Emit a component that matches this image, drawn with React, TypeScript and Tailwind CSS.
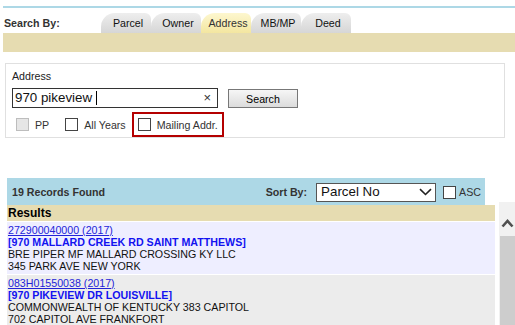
import React from "react";

const tabs = ["Parcel", "Owner", "Address", "MB/MP", "Deed"];

const results = [
  {
    id: "272900040000 (2017)",
    addr: "[970 MALLARD CREEK RD SAINT MATTHEWS]",
    owner: "BRE PIPER MF MALLARD CROSSING KY LLC",
    mail: "345 PARK AVE NEW YORK",
    bg: "bg-[#eeeeff]",
  },
  {
    id: "083H01550038 (2017)",
    addr: "[970 PIKEVIEW DR LOUISVILLE]",
    owner: "COMMONWEALTH OF KENTUCKY 383 CAPITOL",
    mail: "702 CAPITOL AVE FRANKFORT",
    bg: "bg-[#ececec]",
  },
];

function Box({ disabled }: { disabled?: boolean }) {
  return (
    <span
      className={
        disabled
          ? "inline-block w-[13px] h-[13px] border border-[#bdbdbd] bg-[#e6e6e6]"
          : "inline-block w-[13px] h-[13px] border border-[#444] bg-white"
      }
    />
  );
}

export default function App() {
  return (
    <div className="w-[515px] h-[325px] overflow-hidden bg-white font-['Liberation_Sans',Arial,sans-serif] text-[10.67px] text-[#222]">
      <div className="mt-[6px] ml-[3px] h-[2px] bg-[#add8e6]" />

      {/* tab strip */}
      <div className="ml-[3px] flex items-end h-[25px]">
        <div className="w-[98px] pl-[1px] pb-[2px] font-bold text-[#333]">Search By:</div>
        <div className="flex items-end">
          {tabs.map((t) => (
            <div
              key={t}
              className={
                t === "Address"
                  ? "w-[50px] h-[20px] flex items-center justify-center pl-[4px] rounded-tl-[14px] rounded-tr-[6px] bg-linear-to-b from-[#fdf7cf] to-[#f3e6a0] text-[#333]"
                  : "w-[50px] h-[20px] flex items-center justify-center pl-[4px] rounded-tl-[14px] rounded-tr-[6px] bg-linear-to-b from-[#eeeeee] to-[#d6d6d6] text-[#111]"
              }
            >
              {t}
            </div>
          ))}
        </div>
      </div>
      <div className="ml-[3px] h-[19px] bg-[#e6dcb1]" />

      {/* search panel */}
      <div className="mt-[11px] ml-[5px] w-[500px] h-[75px] border border-[#e0e0e0] pl-[6px] pt-[6px]">
        <div className="leading-[12px] text-[#222]">Address</div>
        <div className="mt-[5px] flex items-center">
          <div className="w-[206px] h-[20px] border border-[#333] flex items-center pl-[2px] pr-[6px] text-[13.33px] text-[#111]">
            <span>970 pikeview</span>
            <span className="ml-[4px] w-[1px] h-[14px] bg-black" />
            <span className="ml-auto text-[13px] text-[#333]">×</span>
          </div>
          <div className="ml-[10px] mt-[2px] w-[70px] h-[19px] border border-[#777] bg-linear-to-b from-[#f6f6f6] to-[#dcdcdc] flex items-center justify-center text-black">
            Search
          </div>
        </div>
        <div className="mt-[4px] flex items-center h-[25px]">
          <div className="ml-[4px] flex items-center">
            <Box disabled />
            <span className="ml-[6px] text-[#333]">PP</span>
          </div>
          <div className="ml-[16px] flex items-center">
            <Box />
            <span className="ml-[6px] text-[#333]">All Years</span>
          </div>
          <div className="ml-[6px] w-[92px] h-[25px] border-2 border-[#b40000] flex items-center pl-[4px]">
            <Box />
            <span className="ml-[6px] text-[#333]">Mailing Addr.</span>
          </div>
        </div>
      </div>

      {/* results */}
      <div className="mt-[40px] flex">
        <div className="ml-[7px] w-[488px]">
          <div className="w-[478px] h-[27px] bg-[#add8e6] flex items-center pl-[5px] pt-[1px]">
            <span className="font-bold text-[#333]">19 Records Found</span>
            <span className="ml-auto font-bold text-[#333]">Sort By:</span>
            <div className="ml-[9px] w-[120px] h-[19px] border border-[#555] bg-white flex items-center pl-[4px] pr-[3px] text-[13.33px] text-[#111]">
              <span>Parcel No</span>
              <svg className="ml-auto" width="13" height="8" viewBox="0 0 13 8">
                <path d="M1 1.2 L6.5 6.5 L12 1.2" fill="none" stroke="#222" strokeWidth="1.6" />
              </svg>
            </div>
            <div className="ml-[7px] flex items-center pr-[4px]">
              <Box />
              <span className="ml-[3px] text-[#333]">ASC</span>
            </div>
          </div>
          <div className="h-[16px] bg-[#e6dcb1] pl-[1px] flex items-center text-[12px] font-bold text-black">
            Results
          </div>
          <div className="flex flex-col gap-[1px] mt-[1px]">
            {results.map((r) => (
              <div key={r.id} className={`${r.bg} pl-[1px] py-[2px] leading-[12px]`}>
                <div className="text-[#2323d8] underline">{r.id}</div>
                <div className="text-[#1212f0] font-bold">{r.addr}</div>
                <div className="text-[#111]">{r.owner}</div>
                <div className="text-[#111]">{r.mail}</div>
              </div>
            ))}
          </div>
        </div>
        {/* scrollbar */}
        <div className="ml-[4px] mt-[24px] w-[16px] h-[140px] bg-[#f1f1f1] flex flex-col items-center">
          <svg className="mt-[17px]" width="13" height="9" viewBox="0 0 13 9">
            <path d="M1.5 7.5 L6.5 2 L11.5 7.5" fill="none" stroke="#505050" strokeWidth="2.6" />
          </svg>
          <div className="mt-[8px] w-[15px] ml-[1px] flex-1 bg-[#cdcdcd]" />
        </div>
      </div>
    </div>
  );
}
